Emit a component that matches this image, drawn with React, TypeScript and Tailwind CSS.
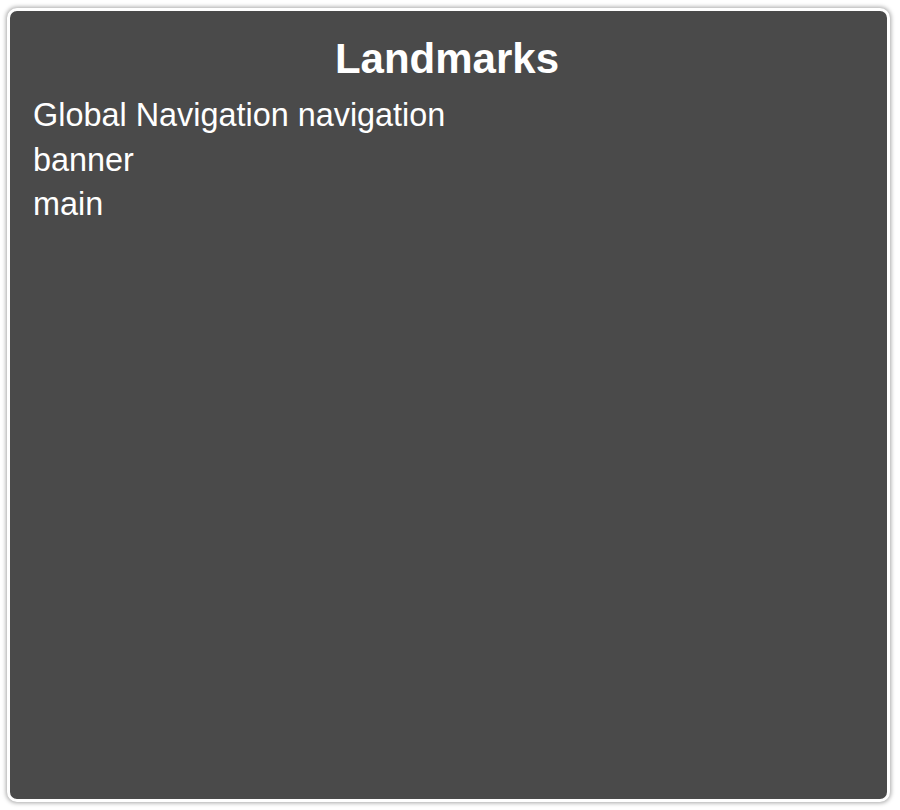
export default function App() {
  return (
    <div className="w-[900px] h-[810px] bg-white pt-[8px] pl-[7px] pr-[10px] pb-[8px] flex">
      <div className="flex-1 rounded-[10px] border-[3px] border-white bg-[#4a4a4a] shadow-[0_0_4px_1px_rgba(0,0,0,0.35)] flex flex-col text-white pl-[23px] pr-[22px] pt-[24px]" style={{ fontFamily: '"Liberation Sans", Arial, sans-serif' }}>
        <h1 className="text-center font-bold text-[42px] leading-[48px] pr-[4px]">Landmarks</h1>
        <ul className="mt-[10px] text-[32.4px] leading-[44.5px]">
          <li>Global Navigation navigation</li>
          <li>banner</li>
          <li>main</li>
        </ul>
      </div>
    </div>
  );
}
